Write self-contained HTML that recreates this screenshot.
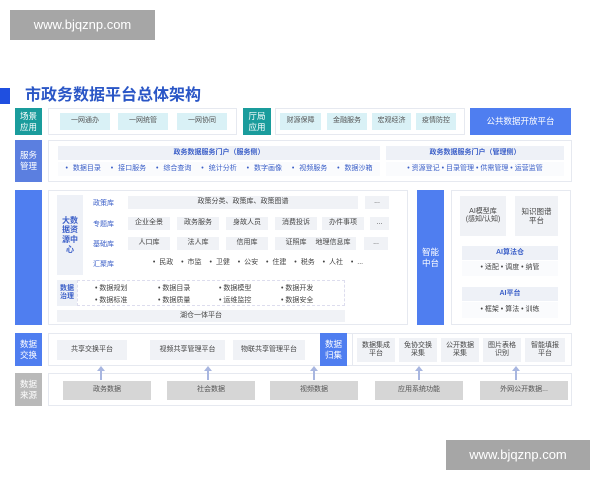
<!DOCTYPE html><html><head><meta charset="utf-8"><style>
*{margin:0;padding:0;box-sizing:border-box}
body{width:600px;height:480px;background:#fff;position:relative;overflow:hidden;font-family:"Liberation Sans","Noto Sans CJK SC",sans-serif;font-size:7px;color:#444}
div{position:absolute}
.c{display:flex;align-items:center;justify-content:center;text-align:center;line-height:1.2}
.lab{color:#fff;font-size:8.5px;line-height:1.25}
.teal{background:#1a9c9c}.blue{background:#4f7ef0}.gray{background:#b9b9b9}
.box{border:1px solid #e6e9f0;background:#fff}
.pc{background:#d9f1f6;color:#555}
.pg{background:#f0f2f6;color:#444}
.hd{background:#eef1f7;color:#3b5fc8;font-weight:bold}
.bl{color:#3b5fc8}
.ds{background:#d6d6d6;color:#555}
.wm{background:#a6a6a6;color:#fff;font-size:13px}
.arr{width:2px;background:#a8b6e0}
.arr:before{content:"";position:absolute;left:-3px;top:-4px;border:4px solid transparent;border-bottom:5px solid #a8b6e0;border-top:0}
</style></head><body>
<div class="c wm" style="left:10px;top:10px;width:145px;height:30px">www.bjqznp.com</div>
<div class="c wm" style="left:446px;top:440px;width:144px;height:30px">www.bjqznp.com</div>
<div style="left:0;top:88px;width:10px;height:16px;background:#1f4fe0"></div>
<div style="left:25px;top:86px;font-size:16px;line-height:20px;font-weight:bold;color:#2a56c6">市政务数据平台总体架构</div>

<div class="c lab teal" style="left:15px;top:108px;width:27px;height:27px">场景<br>应用</div>
<div class="box" style="left:48px;top:108px;width:189px;height:27px"></div>
<div class="c pc" style="left:60px;top:113px;width:50px;height:17px">一网通办</div>
<div class="c pc" style="left:118px;top:113px;width:50px;height:17px">一网统管</div>
<div class="c pc" style="left:177px;top:113px;width:50px;height:17px">一网协同</div>
<div class="c lab teal" style="left:243px;top:108px;width:28px;height:27px">厅局<br>应用</div>
<div class="box" style="left:275px;top:108px;width:190px;height:27px"></div>
<div class="c pc" style="left:280px;top:113px;width:41px;height:17px">财源保障</div>
<div class="c pc" style="left:327px;top:113px;width:40px;height:17px">金融服务</div>
<div class="c pc" style="left:372px;top:113px;width:39px;height:17px">宏观经济</div>
<div class="c pc" style="left:416px;top:113px;width:40px;height:17px">疫情防控</div>
<div class="c blue" style="left:470px;top:108px;width:101px;height:27px;color:#fff;font-size:8.5px">公共数据开放平台</div>

<div class="c lab blue" style="left:15px;top:140px;width:27px;height:42px;background:#5b7fe0">服务<br>管理</div>
<div class="box" style="left:48px;top:140px;width:524px;height:42px"></div>
<div class="c hd" style="left:58px;top:146px;width:322px;height:14px">政务数据服务门户（服务侧）</div>
<div class="c bl" style="left:58px;top:162px;width:322px;height:14px;background:#fafbfd;word-spacing:3px">• 数据目录 &nbsp;• 接口服务 &nbsp;• 综合查询 &nbsp;• 统计分析 &nbsp;• 数字画像 &nbsp;• 视频服务 &nbsp;• 数据沙箱</div>
<div class="c hd" style="left:386px;top:146px;width:178px;height:14px">政务数据服务门户（管理侧）</div>
<div class="c bl" style="left:386px;top:162px;width:178px;height:14px;background:#fafbfd">• 资源登记 • 目录管理 • 供需管理 • 运营监管</div>

<div class="blue" style="left:15px;top:190px;width:27px;height:135px"></div>
<div class="box" style="left:48px;top:190px;width:360px;height:135px"></div>
<div class="c bl" style="left:57px;top:195px;width:26px;height:80px;background:#eef1f7;font-weight:bold;font-size:8px;padding:0 4px">大数据资源中心</div>
<div class="bl" style="left:93px;top:198px">政策库</div>
<div class="c pg" style="left:128px;top:196px;width:230px;height:13px">政策分类、政策库、政策图谱</div>
<div class="c pg" style="left:365px;top:196px;width:24px;height:13px">...</div>
<div class="bl" style="left:93px;top:219px">专题库</div>
<div class="c pg" style="left:128px;top:217px;width:42px;height:13px">企业全景</div>
<div class="c pg" style="left:177px;top:217px;width:42px;height:13px">政务服务</div>
<div class="c pg" style="left:226px;top:217px;width:42px;height:13px">身故人员</div>
<div class="c pg" style="left:275px;top:217px;width:42px;height:13px">消费投诉</div>
<div class="c pg" style="left:322px;top:217px;width:42px;height:13px">办件事项</div>
<div class="c pg" style="left:370px;top:217px;width:19px;height:13px">...</div>
<div class="bl" style="left:93px;top:239px">基础库</div>
<div class="c pg" style="left:128px;top:237px;width:42px;height:13px">人口库</div>
<div class="c pg" style="left:177px;top:237px;width:42px;height:13px">法人库</div>
<div class="c pg" style="left:226px;top:237px;width:42px;height:13px">信用库</div>
<div class="c pg" style="left:275px;top:237px;width:42px;height:13px">证照库</div>
<div class="c pg" style="left:310px;top:237px;width:46px;height:13px">地理信息库</div>
<div class="c pg" style="left:364px;top:237px;width:24px;height:13px">...</div>
<div class="bl" style="left:93px;top:259px">汇聚库</div>
<div class="c" style="left:128px;top:257px;width:260px;height:13px;word-spacing:2px">• 民政 &nbsp;• 市监 &nbsp;• 卫健 &nbsp;• 公安 &nbsp;• 住建 &nbsp;• 税务 &nbsp;• 人社 &nbsp;• ...</div>
<div class="c bl" style="left:57px;top:280px;width:20px;height:26px;background:#eef1f7;font-weight:bold">数据治理</div>
<div style="left:77px;top:280px;width:268px;height:26px;border:1px dashed #dde"></div>
<div style="left:95px;top:283px;line-height:12px">• 数据规划<br>• 数据标准</div>
<div style="left:158px;top:283px;line-height:12px">• 数据目录<br>• 数据质量</div>
<div style="left:219px;top:283px;line-height:12px">• 数据模型<br>• 运维监控</div>
<div style="left:281px;top:283px;line-height:12px">• 数据开发<br>• 数据安全</div>
<div class="c pg" style="left:57px;top:310px;width:288px;height:12px">湖仓一体平台</div>

<div class="c lab blue" style="left:417px;top:190px;width:27px;height:135px">智能<br>中台</div>
<div class="box" style="left:451px;top:190px;width:120px;height:135px"></div>
<div class="c pg" style="left:460px;top:196px;width:46px;height:40px">AI模型库<br>(感知/认知)</div>
<div class="c pg" style="left:515px;top:196px;width:43px;height:40px;font-size:7.5px">知识图谱<br>平台</div>
<div class="c hd" style="left:462px;top:246px;width:96px;height:14px">AI算法仓</div>
<div class="c" style="left:462px;top:261px;width:96px;height:15px;background:#fafbfd">• 适配 • 调度 • 纳管</div>
<div class="c hd" style="left:462px;top:287px;width:96px;height:14px">AI平台</div>
<div class="c" style="left:462px;top:302px;width:96px;height:16px;background:#fafbfd">• 框架 • 算法 • 训练</div>

<div class="c lab blue" style="left:15px;top:333px;width:27px;height:33px">数据<br>交换</div>
<div class="box" style="left:48px;top:333px;width:362px;height:33px"></div>
<div class="c pg" style="left:57px;top:340px;width:70px;height:20px">共享交换平台</div>
<div class="c pg" style="left:150px;top:340px;width:75px;height:20px">视频共享管理平台</div>
<div class="c pg" style="left:233px;top:340px;width:72px;height:20px">物联共享管理平台</div>
<div class="c lab blue" style="left:320px;top:333px;width:27px;height:33px">数据<br>归集</div>
<div class="box" style="left:352px;top:333px;width:220px;height:33px"></div>
<div class="c pg" style="left:357px;top:338px;width:38px;height:24px">数据集成<br>平台</div>
<div class="c pg" style="left:399px;top:338px;width:38px;height:24px">免协交换<br>采集</div>
<div class="c pg" style="left:441px;top:338px;width:38px;height:24px">公开数据<br>采集</div>
<div class="c pg" style="left:483px;top:338px;width:38px;height:24px">图片表格<br>识别</div>
<div class="c pg" style="left:525px;top:338px;width:40px;height:24px">智能填报<br>平台</div>

<div class="c lab gray" style="left:15px;top:373px;width:27px;height:33px">数据<br>来源</div>
<div class="box" style="left:48px;top:373px;width:524px;height:33px"></div>
<div class="c ds" style="left:63px;top:381px;width:88px;height:19px">政务数据</div>
<div class="c ds" style="left:167px;top:381px;width:88px;height:19px">社会数据</div>
<div class="c ds" style="left:270px;top:381px;width:88px;height:19px">视频数据</div>
<div class="c ds" style="left:375px;top:381px;width:88px;height:19px">应用系统功能</div>
<div class="c ds" style="left:480px;top:381px;width:88px;height:19px">外网公开数据...</div>
<div class="arr" style="left:100px;top:370px;height:10px"></div>
<div class="arr" style="left:207px;top:370px;height:10px"></div>
<div class="arr" style="left:313px;top:370px;height:10px"></div>
<div class="arr" style="left:418px;top:370px;height:10px"></div>
<div class="arr" style="left:515px;top:370px;height:10px"></div>
</body></html>
